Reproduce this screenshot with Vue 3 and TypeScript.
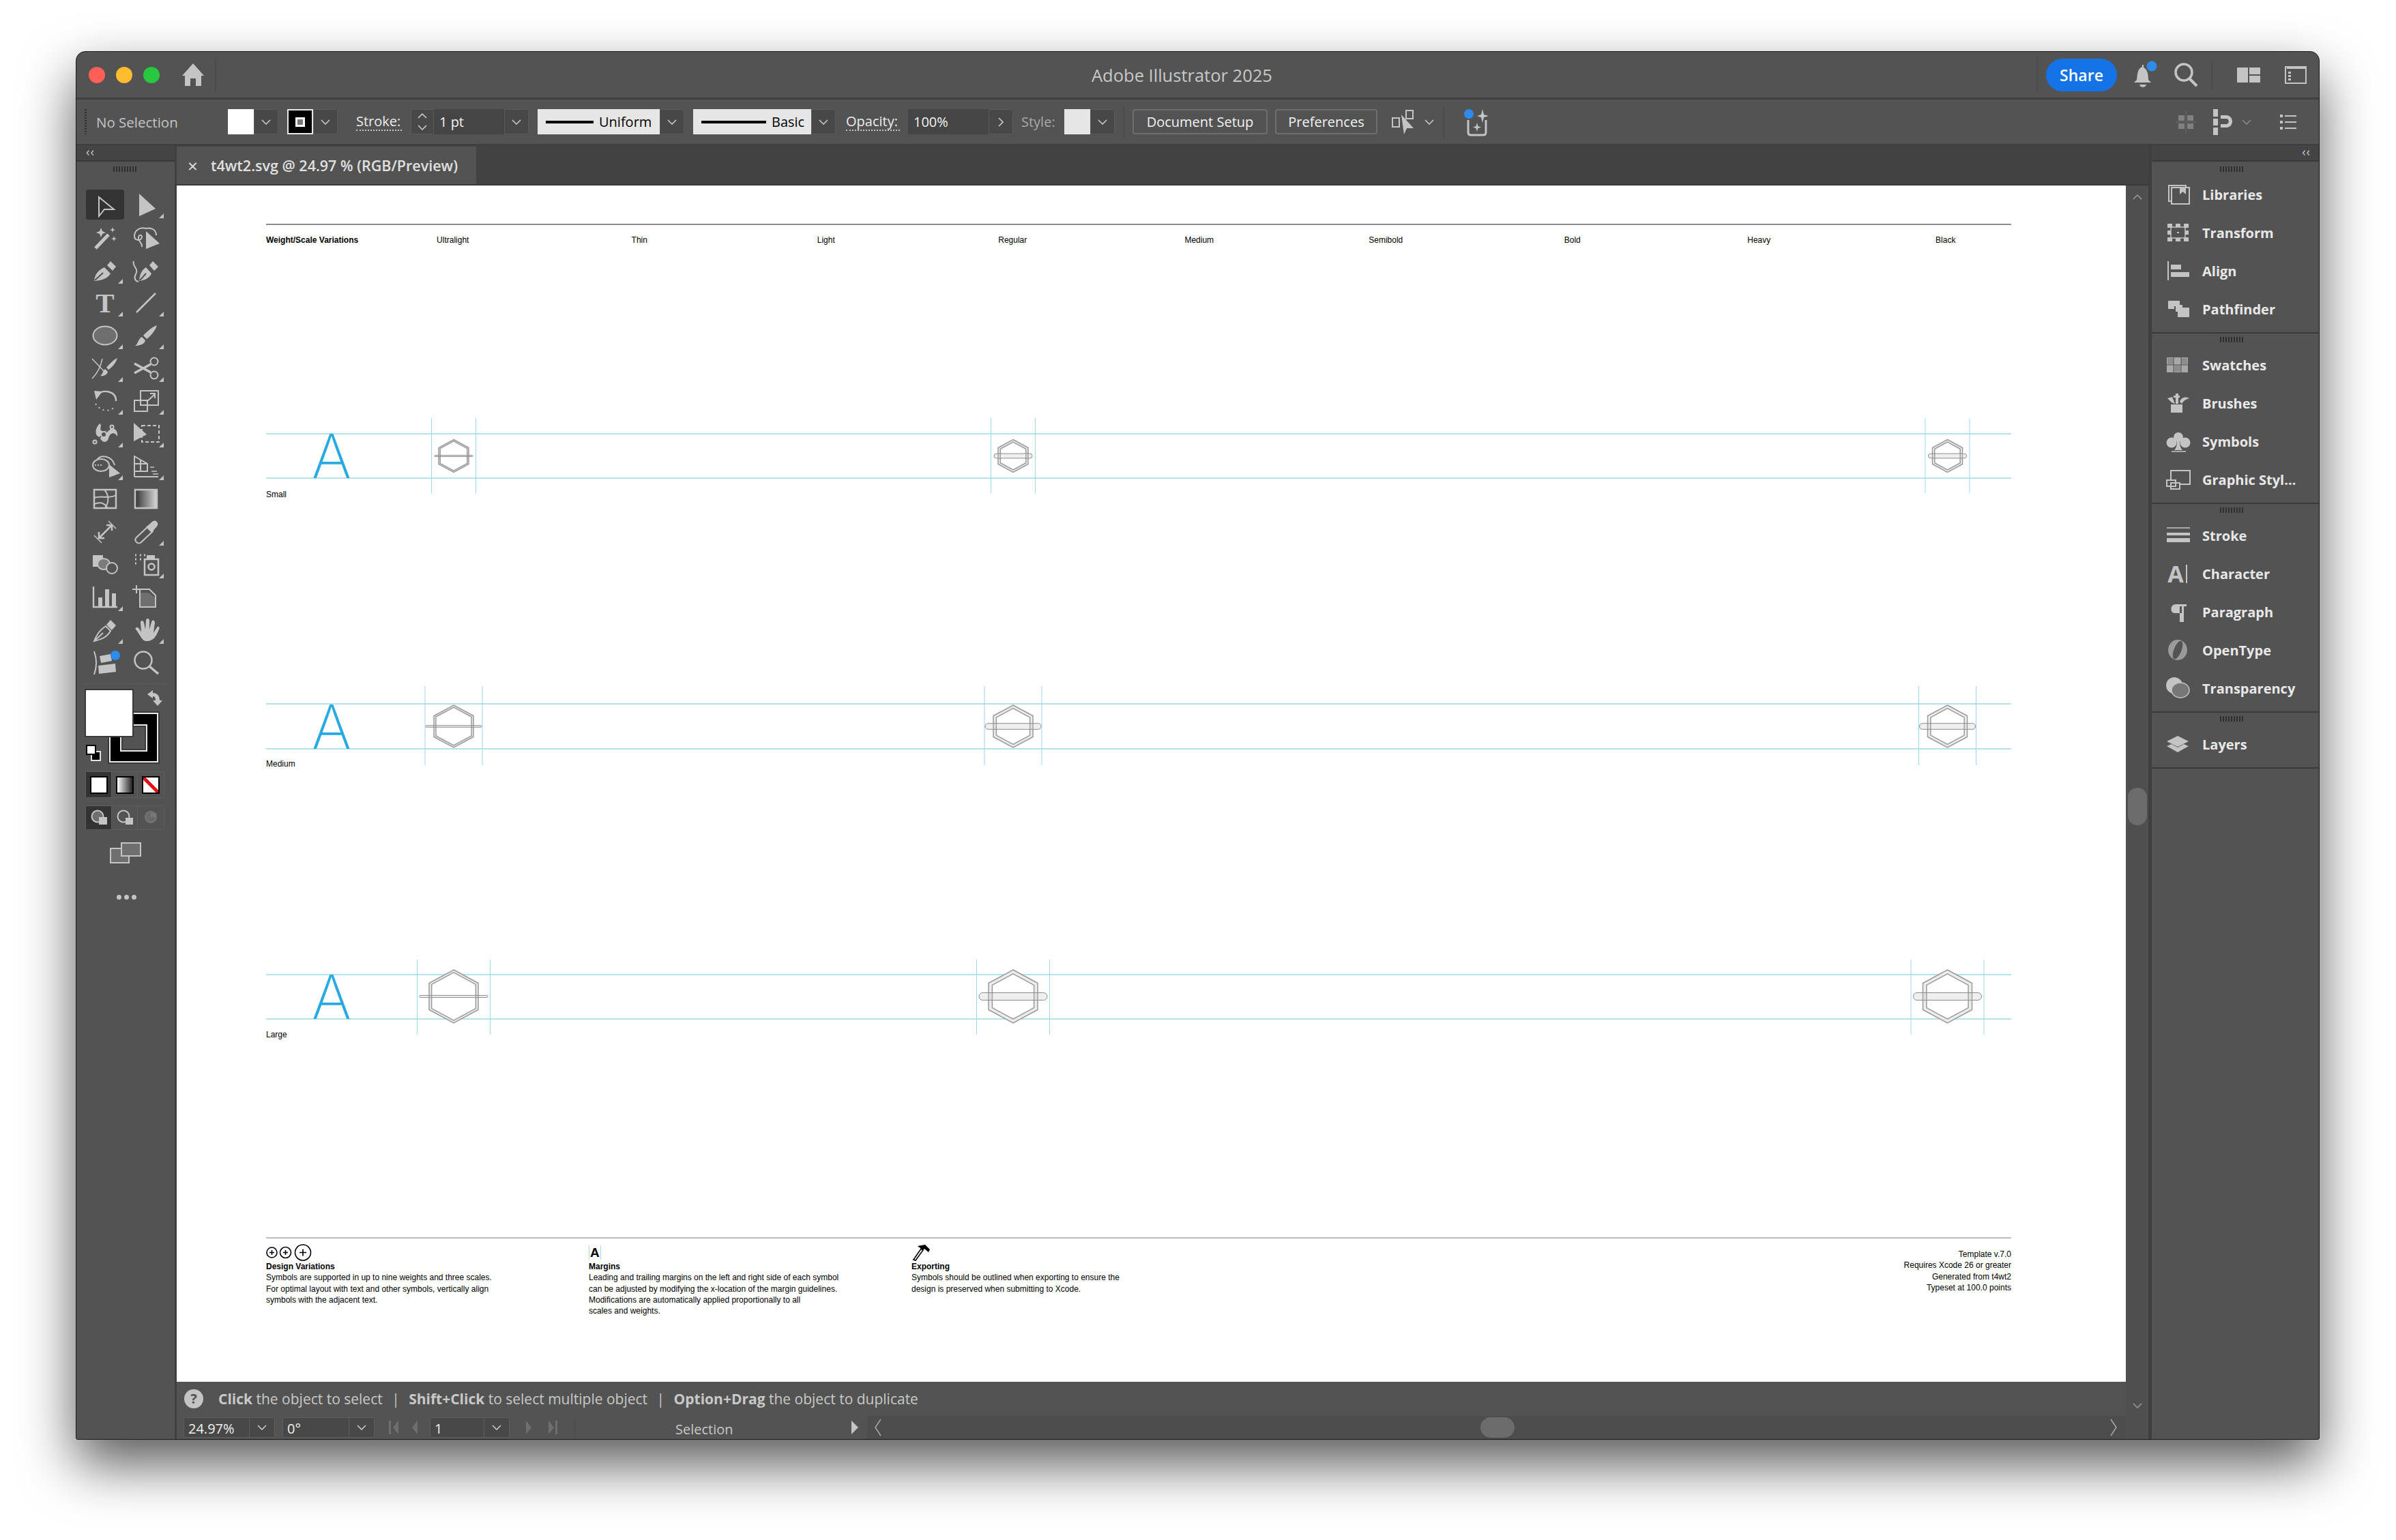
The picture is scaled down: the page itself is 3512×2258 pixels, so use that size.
<script setup lang="ts">
// fill shorthand for the drawn icons
const F = 'fill="#c4c4c4" stroke="none"'

const tools: { body: string; corner?: boolean; active?: boolean }[] = [
  { active: true, body: `<path d="M21 15 L43 33 L29 33 L21 43Z" fill="#333"/>` },
  { corner: true, body: `<path d="M20 10 L44 32 L20 43Z" ${F}/>` },
  { body: `<path d="M16 42 L35 22" stroke-width="5"/><path d="M24 12l2 5 5 2-5 2-2 5-2-5-5-2 5-2z M41 11l1 3 3 1-3 1-1 3-1-3-3-1 3-1z M43 24l1 3 3 1-3 1-1 3-1-3-3-1 3-1z" ${F}/>` },
  { body: `<path d="M30 13 C20 10 13 17 13 24 C13 31 22 32 24 26 C25 22 18 21 19 28 C20 33 25 35 24 40 M30 13 C38 11 45 15 45 23"/><path d="M30 17 L50 35 L30 43Z" ${F}/>` },
  { corner: true, body: `<path d="M14 42 C15 32 20 26 29 22 L38 31 C34 38 27 41 14 42Z M33 19 L38 13 L46 21 L41 27Z" ${F}/><path d="M15 41 L27 30" stroke="#535353"/>` },
  { body: `<path d="M20 42 C28 41 35 38 38 31 L30 22 C25 25 21 30 20 42Z M35 19 L40 13 L48 21 L42 27Z" ${F}/><path d="M21 41 L30 31" stroke="#535353"/><path d="M12 13 C9 20 20 24 15 32 C12 38 14 42 19 43"/>` },
  { corner: true, body: `<text x="30" y="40" font-family="Liberation Serif" font-weight="700" font-size="41" text-anchor="middle" ${F}>T</text>` },
  { corner: true, body: `<path d="M16 40 L44 12" stroke-width="2.5"/>` },
  { corner: true, body: `<ellipse cx="30" cy="26" rx="17.5" ry="13.5" fill="#6f6f6f"/>` },
  { corner: true, body: `<path d="M46 11 C44 18 37 27 31 31 L26 26 C31 20 40 13 46 11Z M24 28 L29 33 C28 39 20 41 14 41 C19 38 18 31 24 28Z" ${F}/>` },
  { corner: true, body: `<path d="M11 12 L32 34 M26 12 C24 22 20 32 11 41" stroke-width="1.5"/><path d="M48 11 C46 18 40 25 35 28 L32 25 C36 20 43 13 48 11Z M30 27 L34 31 C33 36 27 38 23 37 C27 35 26 30 30 27Z" ${F}/>` },
  { corner: true, body: `<circle cx="42" cy="16" r="5.5"/><circle cx="42" cy="36" r="5.5"/><path d="M13 19 L37 32 M13 33 L37 20" stroke-width="3.5"/>` },
  { corner: true, body: `<path d="M19 16 C28 8 47 12 46 26" stroke-width="2.5"/><path d="M14 11 L26 12 L17 24Z" ${F}/><path d="M16 30 C24 42 38 43 45 33" stroke-dasharray="2 5"/>` },
  { corner: true, body: `<rect x="13" y="25" width="19" height="16"/><rect x="22" y="11" width="26" height="21"/><path d="M31 27 L43 16 M36 15 H43 V22"/>` },
  { corner: true, body: `<path d="M22 11 C27 14 20 20 26 22 C32 24 34 18 40 18 C46 18 49 24 48 30 C45 24 40 24 37 28 C34 32 36 36 30 38 C24 38 24 32 20 30 C16 28 14 20 22 11Z" ${F}/><path d="M15 38 L40 16" stroke="#535353"/><circle cx="15" cy="38" r="2.5" fill="#535353"/><circle cx="28" cy="27" r="4" fill="#535353"/><circle cx="40" cy="16" r="2.5" fill="#535353"/>` },
  { corner: true, body: `<rect x="24" y="14" width="25" height="24" stroke-dasharray="5 3"/><path d="M12 10 L31 27 L12 37Z" ${F}/>` },
  { corner: true, body: `<ellipse cx="24" cy="24" rx="12" ry="9"/><path d="M18 16 C24 8 40 10 44 24"/><path d="M15 24h10" stroke-dasharray="2 2"/><path d="M36 23 L52 36 L36 42Z" ${F}/>` },
  { corner: true, body: `<path d="M13 11 L32 22 V33 H13Z M13 41 H48 M13 22 H32 M22 16 V33 M13 33 V41" /><path d="M36 27 H42 M38 33 H46 M40 37 H48" stroke-width="1.5"/>` },
  { body: `<rect x="14" y="12" width="32" height="27" stroke-width="2.5"/><path d="M14 24 C24 20 36 26 46 20 M29 12 C36 20 36 30 30 39 M14 33 C22 30 28 30 34 39"/>` },
  { body: `<defs><linearGradient id="tg" x1="0" x2="1"><stop offset="0" stop-color="#333"/><stop offset="1" stop-color="#d8d8d8"/></linearGradient></defs><rect x="14" y="12" width="32" height="27" fill="url(#tg)" stroke-width="2.5"/>` },
  { body: `<path d="M22 34 L39 17 M32 16 H40 V24 M21 26 V35 H29" stroke-width="2.5"/><path d="M14 31 L25 42 M35 10 L46 21" stroke-width="1.5"/>` },
  { corner: true, body: `<path d="M16 41 C13 38 14 36 16 34 L33 18 L40 25 L23 41 C21 43 18 43 16 41Z"/><path d="M30 19 L38 12 C41 8 46 9 47 13 C48 16 46 18 44 20 L38 27Z" ${F}/>` },
  { body: `<path d="M12 12 H27 V29 H12Z" ${F}/><ellipse cx="28" cy="25" rx="9" ry="8" fill="#7b7b7b"/><circle cx="40" cy="31" r="8" fill="#535353"/>` },
  { corner: true, body: `<rect x="28" y="18" width="20" height="23" stroke-width="2.5"/><circle cx="38" cy="29" r="4.5" stroke-width="2.5"/><path d="M31 12 H43 V18 H31Z" ${F}/><path d="M14 12h2M21 12h2M27 12h2M14 18h2M21 18h2M14 24h2" stroke-width="3"/>` },
  { corner: true, body: `<path d="M13 10 V40 H48" stroke-width="2.5"/><path d="M20 26 H26 V40 H20Z M30 14 H36 V40 H30Z M40 20 H46 V40 H40Z" ${F}/>` },
  { body: `<path d="M10 14 H22 M16 8 V20 M21 14 H35 L44 23 V40 H21Z" stroke-width="2"/><path d="M22 19 H34 L43 26 V39 H22Z" fill="#6f6f6f" stroke="none"/>` },
  { corner: true, body: `<path d="M14 42 C18 32 22 26 31 20 L38 27 C33 36 26 39 14 42Z M14 42 L27 30"/><path d="M32 18 L38 11 L46 19 L40 26Z" ${F}/>` },
  { corner: true, body: `<path d="M16 22 C18 21 21 25 23 29 L22 15 C22 11 26 11 27 15 L29 25 L30 12 C30 8 35 8 35 12 L35 25 L38 14 C39 10 43 11 43 15 L41 30 L46 22 C48 19 51 22 49 25 C45 34 42 42 31 42 C24 42 22 34 16 26 C14 24 14 23 16 22Z" ${F}/>` },
  { body: `<path d="M14 9 C18 20 18 32 14 43" stroke-width="2"/><path d="M22 16 L38 13 L40 23 L24 26Z M20 30 L45 27 L46 39 L21 42Z" ${F}/><circle cx="45" cy="15" r="7" fill="#2d8ceb" stroke="none"/>` },
  { body: `<circle cx="26" cy="22" r="12.5" stroke-width="2.5"/><path d="M35 31 L48 42" stroke-width="3.5"/>` },
]

type Panel = { label: string; body: string }
const panelGroups: Panel[][] = [
  [
    { label: 'Libraries', body: `<path d="M11 26 H8 V3 H33 V6" /><rect x="12" y="6" width="26" height="24"/><path d="M24 6 H33 V16 L28.5 12 L24 16Z" ${F}/>` },
    { label: 'Transform', body: `<rect x="11" y="8" width="21" height="16" stroke-width="1.5"/><path d="M6 3h7v6H6z M18 3h7v5h-7z M30 3h7v6h-7z M6 13h5v6H6z M32 13h5v6h-5z M6 23h7v6H6z M18 24h7v5h-7z M30 23h7v6h-7z M20 15h3v2h-3z" ${F}/>` },
    { label: 'Align', body: `<path d="M7 2 V30" stroke-width="2"/><path d="M11 7 H26 V14 H11Z M11 18 H38 V25 H11Z" ${F}/>` },
    { label: 'Pathfinder', body: `<path d="M7 4 H24 V12 H16 V16 H7Z M18 10 H28 V14 H38 V28 H21 V20 H18Z" ${F}/>` },
  ],
  [
    { label: 'Swatches', body: `<rect x="5" y="5" width="31" height="22" fill="#a8a8a8" stroke="none"/><path d="M6 6 H15 V15 H6Z M26 6 H35 V15 H26Z M16 17 H25 V26 H16Z" fill="#8c8c8c" stroke="none"/><path d="M5 16 H36 M15 5 V27 M26 5 V27" stroke="#535353" stroke-width="1"/>` },
    { label: 'Brushes', body: `<path d="M11 18 H28 V30 H11Z M18 2 H22 V5 H24 V8 H22 V17 H18 V8 H15 V5 H18Z M6 9 L13 7 L17 17 L12 15Z M24 14 C26 8 32 6 38 9 C34 10 30 12 27 17Z" ${F}/>` },
    { label: 'Symbols', body: `<circle cx="22" cy="10" r="7" ${F}/><circle cx="12" cy="18" r="7.5" ${F}/><circle cx="32" cy="18" r="7.5" ${F}/><path d="M20 14 H24 C24 22 25 26 28 29 H16 C19 26 20 22 20 14Z" ${F}/><path d="M12 31 H33" stroke-width="1.5"/>` },
    { label: 'Graphic Styl…', body: `<path d="M11 18 V3 H39 V23 H25" /><rect x="5" y="17" width="13" height="9"/><rect x="11" y="21" width="13" height="9"/>` },
  ],
  [
    { label: 'Stroke', body: `<path d="M5 5 H39" stroke-width="1.5"/><path d="M5 12 H39 V16 H5Z M5 20 H39 V26 H5Z" ${F}/>` },
    { label: 'Character', body: `<text x="18" y="29" font-family="Open Sans" font-size="34" text-anchor="middle" ${F}>A</text><path d="M34 3 V30" stroke-width="2"/>` },
    { label: 'Paragraph', body: `<path d="M24 5 H18 C10 5 9 18 17 18 H24Z M27 5 H30 V31 H27Z M24 5 H34 V8 H24Z M24 18 H27 V31 H24Z" ${F}/>` },
    { label: 'OpenType', body: `<ellipse cx="21" cy="16" rx="14" ry="15" fill="#9a9a9a" stroke="none"/><ellipse cx="21" cy="16" rx="5.5" ry="14" transform="rotate(22 21 16)" fill="#535353" stroke="none"/>` },
    { label: 'Transparency', body: `<circle cx="16" cy="12" r="12" fill="#c4c4c4" stroke="none"/><ellipse cx="25" cy="19" rx="13" ry="11" fill="#777" stroke="#c4c4c4" stroke-width="1.5"/>` },
  ],
  [
    { label: 'Layers', body: `<path d="M21 4 L37 12 L21 20 L5 12Z M5 19 L12 16 L21 21 L30 16 L37 19 L21 28Z" ${F}/>` },
  ],
]

const weights = ['Ultralight', 'Thin', 'Light', 'Regular', 'Medium', 'Semibold', 'Bold', 'Heavy', 'Black']

// one entry per symbol scale, y values are inside the row's svg
const scales = [
  { name: 'Small', h: 105, vh: 110, top: 23, bottom: 88, cy: 55.5, hw: 22, hh: 24, bar: 28, margin: 32.5, vm: 0 },
  { name: 'Medium', h: 107, vh: 116, top: 26, bottom: 92, cy: 59, hw: 29, hh: 31, bar: 41, margin: 42, vm: 0 },
  { name: 'Large', h: 103, vh: 110, top: 22, bottom: 87, cy: 54, hw: 36, hh: 39, bar: 50, margin: 53.5, vm: 0 },
]
const symbols = [
  { x: 275, inset: 0.9, barH: 0.08 },
  { x: 1095, inset: 0.85, barH: 0.28 },
  { x: 2464.5, inset: 0.85, barH: 0.28 },
]

function hexPoints(cx: number, cy: number, w: number, h: number): string {
  return [
    [cx, cy - h],
    [cx + w, cy - h / 2],
    [cx + w, cy + h / 2],
    [cx, cy + h],
    [cx - w, cy + h / 2],
    [cx - w, cy - h / 2],
  ]
    .map((p) => p.join(','))
    .join(' ')
}

const notes = [
  { title: 'Design Variations', lines: ['Symbols are supported in up to nine weights and three scales.', 'For optimal layout with text and other symbols, vertically align', 'symbols with the adjacent text.'] },
  { title: 'Margins', lines: ['Leading and trailing margins on the left and right side of each symbol', 'can be adjusted by modifying the x-location of the margin guidelines.', 'Modifications are automatically applied proportionally to all', 'scales and weights.'] },
  { title: 'Exporting', lines: ['Symbols should be outlined when exporting to ensure the', 'design is preserved when submitting to Xcode.'] },
]
const meta = ['Template v.7.0', 'Requires Xcode 26 or greater', 'Generated from t4wt2', 'Typeset at 100.0 points']
</script>

<template>
  <div class="page">
    <svg width="0" height="0" class="defs">
      <symbol id="chev" viewBox="0 0 14 8"><path d="M1 1 L7 7 L13 1" fill="none" stroke="#c8c8c8" stroke-width="1.6" /></symbol>
    </svg>
    <div class="window">
      <header class="titlebar">
        <span class="light red"></span>
        <span class="light yellow"></span>
        <span class="light green"></span>
        <svg class="home" width="40" height="40" viewBox="0 0 40 40"><path d="M20 3 L36 21 L32 21 L32 36 L24 36 L24 25 L16 25 L16 36 L8 36 L8 21 L4 21Z" fill="#c4c4c4" /></svg>
        <i class="vsep home-sep"></i>
        <div class="app-title">Adobe Illustrator 2025</div>
        <i class="vsep share-sep"></i>
        <button class="share">Share</button>
        <svg class="bell" width="44" height="44" viewBox="0 0 44 44">
          <path d="M19 10 C11 13 12 24 11 29 L7 33 L32 33 L28 29 C28 22 27 14 21 11 L21 7 L19 7Z" fill="#c4c4c4" />
          <path d="M15 36 H25 C24 41 16 41 15 36Z" fill="#c4c4c4" />
          <circle cx="33" cy="9" r="7.5" fill="#2d8ceb" />
        </svg>
        <svg class="search" width="36" height="40" viewBox="0 0 36 40"><circle cx="15" cy="16" r="12" fill="none" stroke="#c4c4c4" stroke-width="3.5" /><path d="M23 25 L34 36" stroke="#c4c4c4" stroke-width="4" /></svg>
        <i class="vsep tall"></i>
        <svg class="layout" width="34" height="22" viewBox="0 0 34 22"><path d="M0 0 H16 V22 H0Z M18 0 H34 V10 H18Z M18 12 H34 V22 H18Z" fill="#c4c4c4" /></svg>
        <svg class="dock" width="32" height="26" viewBox="0 0 32 26"><rect x="1" y="1" width="30" height="24" fill="none" stroke="#c4c4c4" stroke-width="2" /><path d="M3 3 H30" stroke="#c4c4c4" stroke-width="2" /><path d="M5 8 H9 V11 H5Z M5 13 H9 V16 H5Z M5 18 H9 V21 H5Z" fill="#c4c4c4" /></svg>
      </header>

      <div class="controlbar">
        <i class="grip-v"></i>
        <span class="no-sel">No Selection</span>
        <div class="combo"><span class="swatch white"></span><span class="dd"><svg class="chev"><use href="#chev" /></svg></span></div>
        <div class="combo g13">
          <span class="swatch black"><i class="stroke-mark"></i></span>
          <span class="dd"><svg class="chev"><use href="#chev" /></svg></span>
        </div>
        <span class="ctl-label underline stroke-label">Stroke:</span>
        <div class="combo g13">
          <span class="spin"><svg class="chev up"><use href="#chev" /></svg><svg class="chev"><use href="#chev" /></svg></span>
          <span class="input w103">1 pt</span>
          <span class="dd"><svg class="chev"><use href="#chev" /></svg></span>
        </div>
        <div class="combo g13">
          <span class="profile w179"><i class="line w70"></i><b>Uniform</b></span>
          <span class="dd"><svg class="chev"><use href="#chev" /></svg></span>
        </div>
        <div class="combo g13">
          <span class="profile w173"><i class="line w95"></i><b>Basic</b></span>
          <span class="dd"><svg class="chev"><use href="#chev" /></svg></span>
        </div>
        <span class="ctl-label underline opacity-label">Opacity:</span>
        <div class="combo g12">
          <span class="input w118">100%</span>
          <span class="dd"><svg class="chev side"><use href="#chev" /></svg></span>
        </div>
        <span class="ctl-label style-label">Style:</span>
        <div class="combo g12"><span class="swatch light-swatch"></span><span class="dd"><svg class="chev"><use href="#chev" /></svg></span></div>
        <i class="vsep ctl-sep"></i>
        <button class="btn doc">Document Setup</button>
        <button class="btn pref">Preferences</button>
        <svg class="arrange" width="36" height="40" viewBox="0 0 36 40">
          <rect x="2" y="14" width="10" height="13" fill="none" stroke="#c4c4c4" stroke-width="2" />
          <rect x="22" y="3" width="10" height="12" fill="none" stroke="#c4c4c4" stroke-width="2" />
          <path d="M15 9 L33 29 L23 29 L19 38Z" fill="#c4c4c4" />
        </svg>
        <svg class="chev next-chev"><use href="#chev" /></svg>
        <i class="vsep ctl-sep2"></i>
        <svg class="gen" width="40" height="46" viewBox="0 0 40 46">
          <path d="M8 20 V38 C8 41 10 42 12 42 H30 C33 42 34 41 34 38 V20" fill="none" stroke="#c4c4c4" stroke-width="3" />
          <path d="M29 4 L31 12 L38 14 L31 16 L29 24 L27 16 L21 14 L27 12Z M21 24 L22.5 29 L27 30.5 L22.5 32 L21 37 L19.5 32 L15 30.5 L19.5 29Z" fill="#c4c4c4" />
          <circle cx="9" cy="11" r="7" fill="#2d8ceb" />
        </svg>
        <svg class="grid-ic" width="30" height="34" viewBox="0 0 30 34">
          <path d="M4 7 H13 V15 H4Z M17 7 H26 V15 H17Z M4 19 H13 V27 H4Z M17 19 H26 V27 H17Z" fill="#808080" />
          <path d="M15 0 V34 M0 17 H30" stroke="#636363" stroke-width="1.5" />
        </svg>
        <svg class="magnet" width="30" height="40" viewBox="0 0 30 40">
          <path d="M1 1 H8 V12 H1Z M1 15 H8 V25 H1Z M1 28 H8 V39 H1Z" fill="#c4c4c4" />
          <path d="M12 10 H20 C32 10 32 28 20 28 H12 V23 H20 C25 23 25 15 20 15 H12Z" fill="#c4c4c4" />
        </svg>
        <svg class="chev dim-chev"><use href="#chev" /></svg>
        <svg class="list-ic" width="24" height="24" viewBox="0 0 24 24">
          <path d="M0 1 H4 V5 H0Z M0 10 H4 V14 H0Z M0 19 H4 V23 H0Z M7 2 H24 V4 H7Z M7 11 H24 V13 H7Z M7 20 H24 V22 H7Z" fill="#c4c4c4" />
        </svg>
      </div>

      <div class="workspace">
        <aside class="toolbar">
          <div class="collapse"><span>‹‹</span></div>
          <i class="grip"></i>
          <div class="tool-grid">
            <div v-for="(t, i) in tools" :key="i" class="tool" :class="{ active: t.active }">
              <svg width="60" height="48" viewBox="0 0 60 48" fill="none" stroke="#c4c4c4" stroke-width="2" v-html="t.body + (t.corner ? '<path d=&quot;M56 39 V46 H49Z&quot; fill=&quot;#c4c4c4&quot; stroke=&quot;none&quot;/>' : '')"></svg>
            </div>
          </div>
          <i class="tool-rule"></i>
          <div class="colors">
            <div class="stroke-box"><i></i></div>
            <div class="fill-box"></div>
            <svg class="swap" width="24" height="26" viewBox="0 0 24 26"><path d="M2 7 L10 1 L10 5 C17 5 20 10 20 16 L24 16 L17 24 L10 16 L14 16 C14 12 13 10 10 10 L10 13Z" fill="#c4c4c4" /></svg>
            <div class="mini-defaults"><i class="mini-s"></i><i class="mini-f"></i></div>
          </div>
          <div class="seg seg-a">
            <span class="on"><i class="m white-m"></i></span>
            <span><i class="m grad-m"></i></span>
            <span><i class="m none-m"></i></span>
          </div>
          <div class="seg seg-b">
            <span class="on"><svg width="30" height="28" viewBox="0 0 30 28"><circle cx="13" cy="12" r="8.5" fill="#6f6f6f" stroke="#c4c4c4" stroke-width="2" /><rect x="15" y="13" width="12" height="11" fill="#c4c4c4" /></svg></span>
            <span><svg width="30" height="28" viewBox="0 0 30 28"><circle cx="13" cy="12" r="8.5" fill="none" stroke="#c4c4c4" stroke-width="2" /><rect x="16" y="14" width="11" height="10" fill="#c4c4c4" /></svg></span>
            <span><svg width="30" height="28" viewBox="0 0 30 28"><circle cx="15" cy="13" r="8" fill="#6a6a6a" stroke="#777" stroke-width="2" /><path d="M15 13 H23 V7 H15Z" fill="#777" /></svg></span>
          </div>
          <svg class="screen" width="46" height="32" viewBox="0 0 46 32">
            <rect x="1" y="9" width="27" height="21" fill="#6f6f6f" stroke="#c4c4c4" stroke-width="2" />
            <rect x="17" y="1" width="28" height="19" fill="#6f6f6f" stroke="#c4c4c4" stroke-width="2" />
          </svg>
          <div class="more"><i></i><i></i><i></i></div>
        </aside>

        <section class="center">
          <div class="tabs">
            <div class="tab"><span class="close">×</span><span class="tab-title">t4wt2.svg @ 24.97 % (RGB/Preview)</span></div>
          </div>
          <div class="center-body">
            <div class="main">
              <div class="canvas">
                <div class="sheet">
                  <div class="sheet-head">
                    <b>Weight/Scale Variations</b>
                    <span v-for="w in weights" :key="w">{{ w }}</span>
                  </div>
                  <div v-for="s in scales" :key="s.name" class="scale" :class="s.name.toLowerCase()">
                    <svg class="scale-svg" width="2558" :height="s.h" :viewBox="`0 0 2558 ${s.h}`">
                      <line x1="0" x2="2558" :y1="s.top" :y2="s.top" class="guide" />
                      <line x1="0" x2="2558" :y1="s.bottom" :y2="s.bottom" class="guide" />
                      <text x="96" :y="s.bottom" class="big-a">A</text>
                      <g v-for="g in symbols" :key="g.x">
                        <line :x1="g.x - s.margin" :x2="g.x - s.margin" :y1="s.vm" :y2="s.vh" class="guide thin" />
                        <line :x1="g.x + s.margin" :x2="g.x + s.margin" :y1="s.vm" :y2="s.vh" class="guide thin" />
                        <polygon :points="hexPoints(g.x, s.cy, s.hw, s.hh)" class="hex-out" />
                        <polygon :points="hexPoints(g.x, s.cy, s.hw * g.inset, s.hh * g.inset)" class="hex-in" />
                        <rect
                          :x="g.x - s.bar"
                          :y="s.cy - (s.hh * g.barH) / 2"
                          :width="s.bar * 2"
                          :height="s.hh * g.barH"
                          :rx="(s.hh * g.barH) / 2"
                          class="bar"
                        />
                      </g>
                    </svg>
                    <div class="scale-label">{{ s.name }}</div>
                  </div>
                  <div class="sheet-foot">
                    <div v-for="(n, i) in notes" :key="n.title" class="note">
                      <div class="note-icon">
                        <svg v-if="i === 0" width="70" height="25" viewBox="0 0 70 25" fill="none" stroke="#000" stroke-width="1.6">
                          <circle cx="8.5" cy="12.5" r="7.5" /><path d="M5 12.5h7M8.5 9v7" />
                          <circle cx="28.5" cy="12.5" r="8" /><path d="M25 12.5h7M28.5 9v7" />
                          <circle cx="54" cy="12.5" r="11.5" /><path d="M49 12.5h10M54 7.5v10" />
                        </svg>
                        <span v-else-if="i === 1" class="a-mark">A</span>
                        <svg v-else width="30" height="25" viewBox="0 0 30 25" fill="none" stroke="#000" stroke-width="1.6">
                          <path d="M3 23 L14 7 L17 9 L6 24Z" /><path d="M9 3 L20 1 L27 8 L25 12 L19 7 L17 9 L13 6Z" fill="#000" stroke="none" />
                        </svg>
                      </div>
                      <b>{{ n.title }}</b>
                      <div v-for="l in n.lines" :key="l">{{ l }}</div>
                    </div>
                    <div class="meta"><div v-for="m in meta" :key="m">{{ m }}</div></div>
                  </div>
                </div>
              </div>
              <div class="hint">
                <span class="help">?</span>
                <span class="hint-text"><b>Click</b> the object to select <i>|</i> <b>Shift+Click</b> to select multiple object <i>|</i> <b>Option+Drag</b> the object to duplicate</span>
              </div>
              <div class="status">
                <div class="field zoom-f"><span class="v">24.97%</span><span class="d"><svg class="chev"><use href="#chev" /></svg></span></div>
                <div class="field rot-f"><span class="v">0°</span><span class="d"><svg class="chev"><use href="#chev" /></svg></span></div>
                <svg class="nav nav-a" width="44" height="24" viewBox="0 0 44 24"><path d="M0 2 H3 V22 H0Z M14 2 V22 L6 12Z M42 2 V22 L34 12Z" fill="#6f6f6f" /></svg>
                <div class="field page-f"><span class="v">1</span><span class="d"><svg class="chev"><use href="#chev" /></svg></span></div>
                <svg class="nav nav-b" width="46" height="24" viewBox="0 0 46 24"><path d="M0 2 V22 L8 12Z M33 2 V22 L41 12Z M43 2 H46 V22 H43Z" fill="#6f6f6f" /></svg>
                <div class="sel-cell">Selection</div>
                <svg class="sel-arrow" width="10" height="24" viewBox="0 0 10 24"><path d="M0 2 L10 12 L0 22Z" fill="#c4c4c4" /></svg>
                <div class="h-track">
                  <svg class="h-chev" width="10" height="26" viewBox="0 0 10 26"><path d="M9 1 L1 13 L9 25" fill="none" stroke="#a8a8a8" stroke-width="1.5" /></svg>
                  <i class="h-thumb"></i>
                  <svg class="h-chev right" width="10" height="26" viewBox="0 0 10 26"><path d="M1 1 L9 13 L1 25" fill="none" stroke="#a8a8a8" stroke-width="1.5" /></svg>
                </div>
              </div>
            </div>
            <div class="vscroll">
              <svg class="chev flip dim"><use href="#chev" /></svg>
              <i class="v-thumb"></i>
              <svg class="chev dim bottom"><use href="#chev" /></svg>
            </div>
          </div>
        </section>

        <aside class="panels">
          <div class="collapse right"><span>‹‹</span></div>
          <div v-for="(group, gi) in panelGroups" :key="gi" class="panel-group">
            <i class="grip"></i>
            <div v-for="p in group" :key="p.label" class="panel-item">
              <svg width="44" height="32" viewBox="0 0 44 32" fill="none" stroke="#c4c4c4" stroke-width="2" v-html="p.body"></svg>
              <span>{{ p.label }}</span>
            </div>
          </div>
        </aside>
      </div>
    </div>
  </div>
</template>

<style>
html,
body {
  margin: 0;
  background: #fff;
}
</style>

<style scoped>
.page {
  width: 3512px;
  height: 2258px;
  padding: 75px 0 0 111px;
  box-sizing: border-box;
  overflow: hidden;
  font-family: 'Open Sans', 'Liberation Sans', sans-serif;
}
.defs {
  position: absolute;
}
.window {
  width: 3289px;
  height: 2036px;
  box-sizing: border-box;
  display: flex;
  flex-direction: column;
  background: #535353;
  border: 1px solid #1c1c1c;
  border-radius: 14px 14px 3px 3px;
  overflow: hidden;
  box-shadow: 0 36px 80px rgba(0, 0, 0, 0.65);
  color: #c8c8c8;
}
i {
  display: block;
  font-style: normal;
}
.titlebar {
  flex: none;
  height: 70px;
  box-sizing: border-box;
  border-bottom: 3px solid #3f3f3f;
  display: flex;
  align-items: center;
  padding-left: 18px;
}
.light {
  width: 24px;
  height: 24px;
  border-radius: 50%;
  margin-right: 16px;
}
.red {
  background: #ff5f57;
}
.yellow {
  background: #febc2e;
}
.green {
  background: #28c840;
}
.home {
  margin-left: 13px;
}
.vsep {
  width: 2px;
  height: 50px;
  background: #4c4c4c;
}
.home-sep {
  margin-left: 12px;
}
.app-title {
  margin-left: 1283px;
  width: 271px;
  font-size: 25.5px;
  white-space: nowrap;
  color: #c8c8c8;
}
.share-sep {
  margin-left: auto;
  height: 54px;
}
.share {
  margin-left: 12px;
  width: 104px;
  height: 48px;
  border: 0;
  padding: 0;
  border-radius: 24px;
  background: #1473e6;
  color: #fff;
  font: 600 23px 'Open Sans', sans-serif;
}
.bell {
  margin-left: 18px;
}
.search {
  margin-left: 21px;
}
.tall {
  margin-left: 19px;
  height: 40px;
}
.layout {
  margin-left: 36px;
}
.dock {
  margin: 0 18px 0 36px;
}

.controlbar {
  flex: none;
  height: 67px;
  box-sizing: border-box;
  border-bottom: 2px solid #3f3f3f;
  display: flex;
  align-items: center;
  padding-left: 12px;
}
.grip-v {
  width: 3px;
  height: 37px;
  background: repeating-linear-gradient(#2f2f2f 0 2px, transparent 2px 4px);
}
.no-sel {
  margin-left: 14px;
  width: 193px;
  font-size: 20.5px;
  color: #c4c4c4;
  white-space: nowrap;
}
.combo {
  display: flex;
  height: 37px;
  flex: none;
}
.g13 {
  margin-left: 13px;
}
.g12 {
  margin-left: 12px;
}
.swatch {
  width: 38px;
  height: 37px;
  box-sizing: border-box;
  display: flex;
  align-items: center;
  justify-content: center;
}
.swatch.white {
  background: #fff;
}
.swatch.black {
  background: #000;
  border: 2px solid #e6e6e6;
}
.stroke-mark {
  width: 14px;
  height: 14px;
  border: 3px solid #fff;
  box-sizing: border-box;
  background: #777;
  outline: 2px solid #000;
}
.light-swatch {
  background: #e6e6e6;
}
.dd {
  width: 36px;
  background: #484848;
  border: 1px solid #5a5a5a;
  box-sizing: border-box;
  display: flex;
  align-items: center;
  justify-content: center;
  border-radius: 0 3px 3px 0;
}
.chev {
  width: 14px;
  height: 8px;
  display: block;
}
.chev.up,
.chev.flip {
  transform: scaleY(-1);
}
.chev.side {
  transform: rotate(-90deg);
}
.ctl-label {
  font-size: 20px;
  color: #ececec;
  white-space: nowrap;
}
.underline {
  border-bottom: 2px dotted #c4c4c4;
  line-height: 25px;
}
.stroke-label {
  margin-left: 27px;
  width: 67px;
}
.opacity-label {
  margin-left: 15px;
  width: 79px;
}
.style-label {
  margin-left: 12px;
  width: 51px;
  color: #a8a8a8;
}
.spin {
  width: 34px;
  background: #484848;
  border: 1px solid #5a5a5a;
  box-sizing: border-box;
  display: flex;
  flex-direction: column;
  align-items: center;
  justify-content: center;
  gap: 9px;
}
.input {
  background: #454545;
  color: #f2f2f2;
  font-size: 20px;
  line-height: 37px;
  padding-left: 8px;
  box-sizing: border-box;
}
.w103 {
  width: 103px;
}
.w118 {
  width: 118px;
}
.profile {
  background: #e6e6e6;
  display: flex;
  align-items: center;
  color: #000;
  padding-left: 12px;
  box-sizing: border-box;
  font-size: 20px;
}
.profile b {
  font-weight: 400;
  margin-left: 8px;
  white-space: nowrap;
}
.w179 {
  width: 179px;
}
.w173 {
  width: 173px;
}
.line {
  flex: none;
  height: 4px;
  background: #000;
}
.w70 {
  width: 70px;
}
.w95 {
  width: 95px;
}
.ctl-sep {
  margin-left: 12px;
  height: 48px;
}
.btn {
  height: 37px;
  background: transparent;
  border: 2px solid #6e6e6e;
  border-radius: 4px;
  color: #f4f4f4;
  font: 400 20px 'Open Sans', sans-serif;
  padding: 0;
  white-space: nowrap;
}
.doc {
  margin-left: 12px;
  width: 198px;
}
.pref {
  margin-left: 11px;
  width: 150px;
}
.arrange {
  margin-left: 20px;
}
.next-chev {
  margin-left: 13px;
}
.ctl-sep2 {
  margin-left: 13px;
}
.gen {
  margin-left: 27px;
}
.grid-ic {
  margin-left: auto;
}
.magnet {
  margin-left: 24px;
}
.dim-chev {
  margin-left: 13px;
  opacity: 0.45;
}
.list-ic {
  margin: 0 33px 0 42px;
}

.workspace {
  flex: 1;
  min-height: 0;
  display: flex;
}
.toolbar {
  flex: none;
  width: 147px;
  box-sizing: border-box;
  border-right: 3px solid #3f3f3f;
  display: flex;
  flex-direction: column;
}
.collapse {
  flex: none;
  height: 24px;
  box-sizing: border-box;
  background: #444;
  border-bottom: 2px solid #3a3a3a;
  font-size: 18px;
  line-height: 18px;
  color: #c4c4c4;
  padding-left: 14px;
  letter-spacing: 1px;
}
.collapse.right {
  text-align: right;
  padding: 0 12px 0 0;
}
.grip {
  flex: none;
  width: 36px;
  height: 8px;
  margin: 7px auto 0;
  background: repeating-linear-gradient(90deg, #2f2f2f 0 2px, transparent 2px 4px);
}
.tool-grid {
  margin: 22px 0 0 12px;
  display: grid;
  grid-template-columns: 60px 60px;
  grid-auto-rows: 48px;
}
.tool {
  position: relative;
}
.tool svg {
  display: block;
}
.tool.active::before {
  content: '';
  position: absolute;
  left: 2px;
  right: 2px;
  top: 4px;
  bottom: 0;
  border-radius: 4px;
  background: #333;
}
.tool.active svg {
  position: relative;
}
.tool-rule {
  height: 1px;
  margin: 8px 10px 0;
  background: #5e5e5e;
}
.colors {
  position: relative;
  flex: none;
  height: 108px;
  margin: 7px 0 0 12px;
}
.fill-box {
  position: absolute;
  left: 0;
  top: 0;
  width: 72px;
  height: 71px;
  box-sizing: border-box;
  background: #fff;
  border: 2px solid #3a3a3a;
}
.stroke-box {
  position: absolute;
  left: 36px;
  top: 35px;
  width: 72px;
  height: 73px;
  box-sizing: border-box;
  background: #000;
  border: 2px solid #e8e8e8;
  outline: 2px solid #3a3a3a;
  outline-offset: 0;
  display: flex;
  align-items: center;
  justify-content: center;
}
.stroke-box i {
  width: 36px;
  height: 36px;
  box-sizing: border-box;
  background: #535353;
  border: 2px solid #3a3a3a;
  outline: 2px solid #e8e8e8;
}
.swap {
  position: absolute;
  left: 90px;
  top: 1px;
}
.mini-defaults {
  position: absolute;
  left: 1px;
  top: 82px;
  width: 24px;
  height: 24px;
}
.mini-s {
  position: absolute;
  left: 8px;
  top: 9px;
  width: 15px;
  height: 15px;
  background: #000;
  border: 2px solid #e0e0e0;
  box-sizing: border-box;
}
.mini-f {
  position: absolute;
  left: 1px;
  top: 0;
  width: 15px;
  height: 15px;
  background: #fff;
  border: 2px solid #000;
  box-sizing: border-box;
}
.seg {
  flex: none;
  display: grid;
  grid-template-columns: repeat(3, 1fr);
  width: 116px;
  margin-left: 13px;
  border: 1px solid #5e5e5e;
  border-radius: 3px;
  box-sizing: border-box;
}
.seg span {
  display: flex;
  align-items: center;
  justify-content: center;
  border-right: 1px solid #5e5e5e;
}
.seg span:last-child {
  border-right: 0;
}
.seg .on {
  background: #333;
}
.seg-a {
  height: 39px;
  margin-top: 13px;
}
.seg-b {
  height: 36px;
  margin-top: 11px;
}
.m {
  width: 26px;
  height: 26px;
  box-sizing: border-box;
  border: 2px solid #000;
}
.white-m {
  background: #fff;
}
.grad-m {
  background: linear-gradient(90deg, #fff, #222);
}
.none-m {
  background: linear-gradient(135deg, #fff 0 42%, #e81010 42% 58%, #fff 58%);
  transform: scaleX(-1);
}
.screen {
  flex: none;
  margin: 18px 0 0 49px;
}
.more {
  flex: none;
  display: flex;
  gap: 4px;
  margin: 45px 0 0 59px;
}
.more i {
  width: 7px;
  height: 7px;
  border-radius: 50%;
  background: #c4c4c4;
}

.center {
  flex: none;
  width: 2890px;
  display: flex;
  flex-direction: column;
}
.tabs {
  flex: none;
  height: 59px;
  box-sizing: border-box;
  background: #424242;
  border-bottom: 2px solid #3a3a3a;
  padding-top: 2px;
}
.tab {
  width: 439px;
  height: 55px;
  background: #535353;
  display: flex;
  align-items: center;
  padding-left: 16px;
  box-sizing: border-box;
}
.close {
  font-size: 26px;
  width: 34px;
  color: #e0e0e0;
}
.tab-title {
  font-size: 21.5px;
  font-weight: 600;
  white-space: nowrap;
  color: #e0e0e0;
}
.center-body {
  flex: 1;
  min-height: 0;
  display: flex;
}
.main {
  flex: none;
  width: 2857px;
  display: flex;
  flex-direction: column;
}
.canvas {
  flex: none;
  height: 1754px;
  background: #fff;
  padding: 56px 0 0 131px;
  box-sizing: border-box;
  overflow: hidden;
  color: #000;
  font-family: 'Liberation Sans', Arial, sans-serif;
  font-size: 12px;
  line-height: 16.3px;
}
.sheet {
  width: 2558px;
}
.sheet-head {
  border-top: 2px solid #8c8c8c;
  display: grid;
  grid-template-columns: 137px repeat(9, 273.5px);
  padding-top: 14px;
  height: 32px;
  box-sizing: border-box;
  line-height: 16px;
  white-space: nowrap;
}
.sheet-head span {
  text-align: center;
}
.scale-svg {
  display: block;
  overflow: visible;
}
.small {
  margin-top: 253px;
}
.medium {
  margin-top: 274px;
}
.large {
  margin-top: 280px;
}
.scale-label {
  height: 14px;
  line-height: 14px;
}
.guide {
  stroke: #9cd8ea;
  stroke-width: 1.5;
}
.guide.thin {
  stroke-width: 1;
}
.big-a {
  font-family: Inter, sans-serif;
  font-weight: 150;
  font-size: 89px;
  text-anchor: middle;
  fill: #27aae1;
}
.hex-out,
.hex-in {
  fill: none;
  stroke: #9a9a9a;
  stroke-width: 1.5;
}
.hex-out {
  fill: #ececec;
}
.hex-in {
  fill: #fff;
}
.bar {
  fill: rgba(190, 190, 190, 0.25);
  stroke: #8c8c8c;
  stroke-width: 1;
}
.sheet-foot {
  margin-top: 290px;
  border-top: 2px solid #bdbdbd;
  display: grid;
  grid-template-columns: 473px 473px 1fr 400px;
  padding-top: 8px;
}
.note {
  white-space: nowrap;
}
.note-icon {
  height: 25px;
}
.note-icon svg {
  display: block;
}
.a-mark {
  font-weight: 700;
  font-size: 19px;
  line-height: 25px;
  padding: 0 1px;
  border-left: 1px solid #a6dcec;
  border-right: 1px solid #a6dcec;
}
.meta {
  text-align: right;
  padding-top: 7px;
  white-space: nowrap;
}
.hint {
  flex: none;
  height: 50px;
  display: flex;
  align-items: center;
  padding-left: 11px;
  background: #535353;
  font-size: 21px;
  color: #c8c8c8;
}
.help {
  width: 28px;
  height: 28px;
  border-radius: 50%;
  background: #c4c4c4;
  color: #535353;
  font-weight: 700;
  font-size: 20px;
  line-height: 28px;
  text-align: center;
}
.hint-text {
  margin-left: 22px;
  white-space: nowrap;
}
.hint-text b {
  font-weight: 700;
}
.hint-text i {
  display: inline;
  margin: 0 8px;
  font-style: normal;
}
.status {
  flex: none;
  height: 34px;
  display: flex;
  align-items: center;
  padding-left: 10px;
  font-size: 20px;
}
.field {
  height: 30px;
  display: flex;
  background: #484848;
  border: 1px solid #5e5e5e;
  box-sizing: border-box;
  border-radius: 3px;
  color: #f2f2f2;
}
.field .v {
  flex: 1;
  padding-left: 6px;
  line-height: 32px;
}
.field .d {
  width: 36px;
  display: flex;
  align-items: center;
  justify-content: center;
  border-left: 1px solid #5e5e5e;
}
.zoom-f {
  width: 134px;
}
.rot-f {
  width: 135px;
  margin-left: 11px;
}
.page-f {
  width: 117px;
  margin-left: 16px;
}
.nav-a {
  margin-left: 21px;
}
.nav-b {
  margin-left: 24px;
}
.sel-cell {
  margin-left: 25px;
  width: 391px;
  box-sizing: border-box;
  padding: 4px 0 0 147px;
  color: #c8c8c8;
  border-left: 1px solid #4d4d4d;
}
.sel-arrow {
  margin-left: 15px;
}
.h-track {
  margin-left: 13px;
  flex: 1;
  height: 34px;
  background: #4d4d4d;
  display: flex;
  align-items: center;
}
.h-chev {
  margin-left: 11px;
}
.h-chev.right {
  margin: 0 13px 0 auto;
}
.h-thumb {
  margin-left: 878px;
  width: 50px;
  height: 30px;
  border-radius: 15px;
  background: #6c6c6c;
}
.vscroll {
  flex: none;
  width: 33px;
  display: flex;
  flex-direction: column;
  align-items: center;
  padding: 13px 0 45px;
  box-sizing: border-box;
  background: #4f4f4f;
}
.dim {
  opacity: 0.6;
}
.v-thumb {
  margin-top: 862px;
  width: 28px;
  height: 55px;
  border-radius: 14px;
  background: #6c6c6c;
}
.bottom {
  margin-top: auto;
}
.panels {
  flex: none;
  width: 250px;
  box-sizing: border-box;
  border-left: 5px solid #3f3f3f;
}
.panel-group {
  padding: 0 0 6px;
  border-bottom: 2px solid #3a3a3a;
  margin-bottom: -2px;
  height: auto;
}
.panel-group .grip {
  margin: 7px auto 5px;
  position: relative;
  left: -5px;
}
.panel-item {
  height: 56px;
  display: flex;
  align-items: center;
  padding-left: 17px;
  gap: 13px;
  font-size: 20px;
  font-weight: 700;
  color: #e8e8e8;
  white-space: nowrap;
}
.panel-item svg {
  flex: none;
  overflow: visible;
}
</style>
